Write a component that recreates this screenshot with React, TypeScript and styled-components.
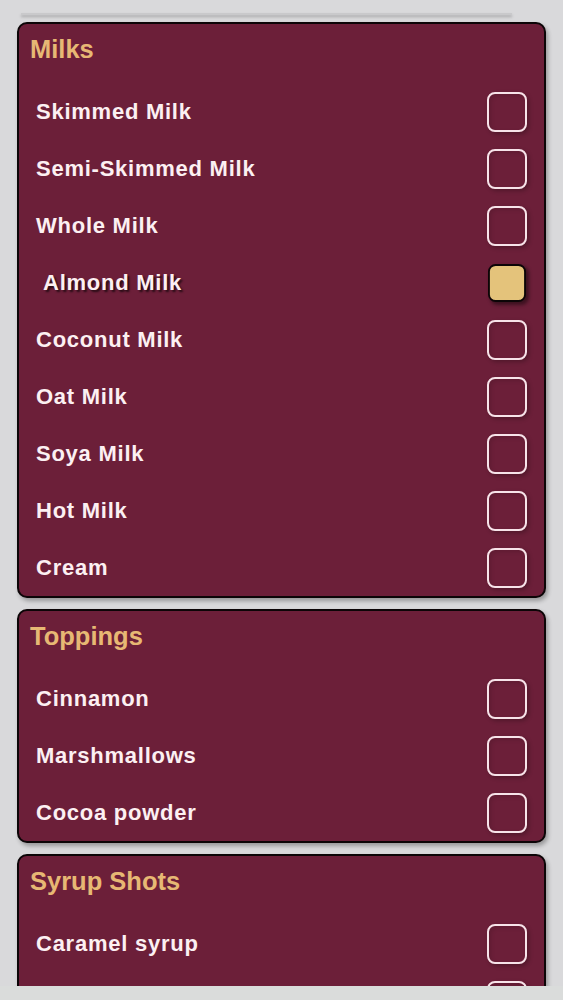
import React from "react";
import styled, { createGlobalStyle } from "styled-components";

const GlobalStyle = createGlobalStyle`
  html, body {
    margin: 0;
    padding: 0;
    background: #d9d9db;
  }
  body {
    font-family: "Liberation Sans", Arial, sans-serif;
  }
  * { box-sizing: border-box; }
`;

const Page = styled.div`
  width: 563px;
  height: 1000px;
  display: flex;
  flex-direction: column;
  background: #d9d9db;
`;

const Scroll = styled.div`
  height: 986px;
  flex-shrink: 0;
  overflow: hidden;
  display: flex;
  flex-direction: column;
  padding: 0 17px;
`;

const Footer = styled.div`
  flex: 1;
  background: #dadcdb;
`;

const PrevCardEdge = styled.div`
  height: 2px;
  margin: 13px 34px 7px 4px;
  background: #c9c9cb;
  box-shadow: 0 2px 3px rgba(0, 0, 0, 0.25);
  flex-shrink: 0;
`;

const Card = styled.section`
  flex-shrink: 0;
  background: #6c1f39;
  border: 2px solid #0c0507;
  border-radius: 10px;
  box-shadow: 2px 3px 4px rgba(0, 0, 0, 0.3);
  padding: 11px 0 0;
  margin-bottom: 11px;
`;

const Title = styled.h2`
  margin: 0 0 20px;
  padding: 0 11px;
  height: 28px;
  line-height: 28px;
  font-size: 25.5px;
  font-weight: 700;
  color: #e7b874;
`;

const List = styled.ul`
  list-style: none;
  margin: 0;
  padding: 0;
`;

const Row = styled.li`
  height: 57px;
  display: flex;
  align-items: center;
  justify-content: space-between;
  padding: 0 17px 0 17px;
`;

const Label = styled.span<{ $on?: boolean }>`
  font-size: 22px;
  letter-spacing: 0.75px;
  font-weight: 700;
  color: #fcf0f2;
  padding-left: ${(p) => (p.$on ? "7px" : "0")};
  text-shadow: ${(p) => (p.$on ? "2px 2px 2px rgba(0,0,0,0.65)" : "none")};
`;

const Box = styled.span<{ $on?: boolean }>`
  width: 40px;
  height: 40px;
  border-radius: 8px;
  border: 2px solid ${(p) => (p.$on ? "#0c0507" : "#f7e3e9")};
  background: ${(p) => (p.$on ? "#e4c37b" : "transparent")};
  box-shadow: ${(p) =>
    p.$on
      ? "3px 3px 4px rgba(0,0,0,0.45)"
      : "2px 2px 4px rgba(0,0,0,0.25), inset 2px 2px 4px rgba(0,0,0,0.12)"};
  flex-shrink: 0;
  ${(p) => (p.$on ? "transform: scale(0.95);" : "")}
`;

type Item = { name: string; on?: boolean };
type Group = { title: string; items: Item[] };

const groups: Group[] = [
  {
    title: "Milks",
    items: [
      { name: "Skimmed Milk" },
      { name: "Semi-Skimmed Milk" },
      { name: "Whole Milk" },
      { name: "Almond Milk", on: true },
      { name: "Coconut Milk" },
      { name: "Oat Milk" },
      { name: "Soya Milk" },
      { name: "Hot Milk" },
      { name: "Cream" },
    ],
  },
  {
    title: "Toppings",
    items: [{ name: "Cinnamon" }, { name: "Marshmallows" }, { name: "Cocoa powder" }],
  },
  {
    title: "Syrup Shots",
    items: [{ name: "Caramel syrup" }, { name: "Vanilla syrup" }],
  },
];

export default function App() {
  return (
    <>
      <GlobalStyle />
      <Page>
        <Scroll>
          <PrevCardEdge />
          {groups.map((g) => (
            <Card key={g.title}>
              <Title>{g.title}</Title>
              <List>
                {g.items.map((it) => (
                  <Row key={it.name}>
                    <Label $on={it.on}>{it.name}</Label>
                    <Box $on={it.on} />
                  </Row>
                ))}
              </List>
            </Card>
          ))}
        </Scroll>
        <Footer />
      </Page>
    </>
  );
}
